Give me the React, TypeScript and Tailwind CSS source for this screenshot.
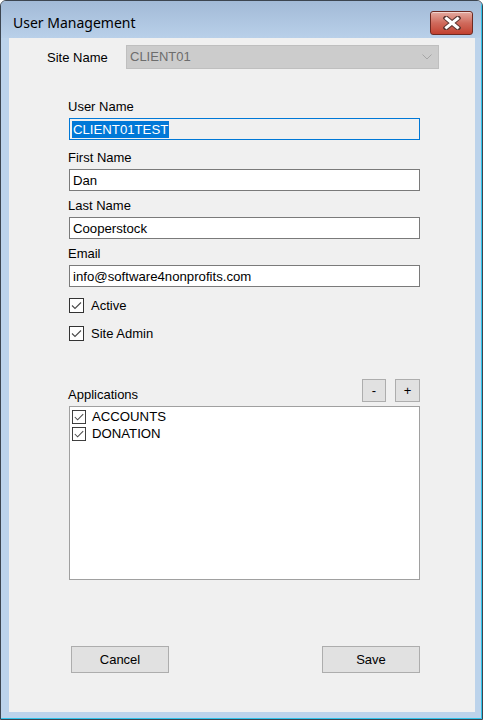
import { ReactNode } from "react";

const font = { fontFamily: '"Liberation Sans", Arial, sans-serif' };

function Label({ children }: { children: ReactNode }) {
  return <div className="-ml-px h-[15px] text-[13px] leading-[15px] text-black">{children}</div>;
}

function TextBox({ value, focused = false }: { value: string; focused?: boolean }) {
  return (
    <div
      className={
        "flex h-[22px] w-[351px] items-center border px-[2px] text-[13.2px] " +
        (focused ? "border-[#0078d7] bg-[#f0f0f0]" : "border-[#7a7a7a] bg-white")
      }
    >
      {focused ? (
        <span className="bg-[#0078d7] px-px leading-[17px] text-white">{value}</span>
      ) : (
        <span className="pl-px leading-[17px] text-black">{value}</span>
      )}
    </div>
  );
}

function Check({ size = 15 }: { size?: number }) {
  return (
    <svg width={size} height={size} viewBox="0 0 15 15" className="shrink-0">
      <rect x="0.5" y="0.5" width="14" height="14" fill="white" stroke="#333333" />
      <path d="M3 7.5 L6 10.5 L12 4.5" fill="none" stroke="#4a4a4a" strokeWidth="1.1" />
    </svg>
  );
}

function Button({ children, className = "" }: { children: ReactNode; className?: string }) {
  return (
    <div
      className={
        "flex items-center justify-center border border-[#adadad] bg-[#e1e1e1] text-[13px] text-black " +
        className
      }
    >
      {children}
    </div>
  );
}

export default function App() {
  return (
    <div
      style={font}
      className="h-[720px] w-[483px] overflow-hidden rounded-t-[6px] border border-[#3c4550] bg-[#bcd3eb]"
    >
      <div className="flex h-full flex-col border-b border-r border-[#2fc3ea]">
        {/* title bar */}
        <div className="flex h-[37px] shrink-0 items-start justify-between bg-gradient-to-b from-[#a2bad7] to-[#b9d0e9] pl-[12px] pr-[8px]">
          <div
            className="mt-[13px] text-[14px] leading-[18px] text-black"
            style={{ fontFamily: '"Noto Sans", "Open Sans", sans-serif' }}
          >
            User Management
          </div>
          <div className="mt-[10px] flex h-[24px] w-[43px] items-center justify-center rounded-[3px] border border-[#6e2a22] bg-gradient-to-b from-[#e4aaa0] via-[#cf6a5c] to-[#c2402f] shadow-[inset_0_1px_0_rgba(255,255,255,0.5)]">
            <svg width="18" height="14" viewBox="0 0 18 14">
              <path d="M3 2 L15 12 M15 2 L3 12" stroke="#5b3632" strokeWidth="5" strokeLinecap="square" />
              <path d="M3.5 2.5 L14.5 11.5 M14.5 2.5 L3.5 11.5" stroke="#ffffff" strokeWidth="3" strokeLinecap="square" />
            </svg>
          </div>
        </div>

        {/* client area */}
        <div className="ml-[8px] mr-[6px] flex flex-1 flex-col bg-[#f0f0f0]">
          <div className="mt-[7px] flex items-center">
            <div className="ml-[38px] w-[79px] text-[13px] leading-[15px] text-black">Site Name</div>
            <div className="flex h-[24px] w-[313px] items-center justify-between border border-[#bfbfbf] bg-[#cccccc] pl-[3px] pr-[6px] text-[13px] text-[#6d6d6d]">
              <span>CLIENT01</span>
              <svg width="10" height="6" viewBox="0 0 10 6">
                <path d="M0.5 0.5 L5 5 L9.5 0.5" fill="none" stroke="#a6a6a6" strokeWidth="1" />
              </svg>
            </div>
          </div>

          <div className="ml-[60px] flex w-[351px] flex-col">
            <div className="mt-[30px]">
              <Label>User Name</Label>
            </div>
            <div className="mt-[4px]">
              <TextBox value="CLIENT01TEST" focused />
            </div>
            <div className="mt-[10px]">
              <Label>First Name</Label>
            </div>
            <div className="mt-[4px]">
              <TextBox value="Dan" />
            </div>
            <div className="mt-[7px]">
              <Label>Last Name</Label>
            </div>
            <div className="mt-[4px]">
              <TextBox value="Cooperstock" />
            </div>
            <div className="mt-[7px]">
              <Label>Email</Label>
            </div>
            <div className="mt-[4px]">
              <TextBox value="info@software4nonprofits.com" />
            </div>

            <div className="mt-[11px] flex h-[15px] items-center gap-[7px] text-[13px]">
              <Check />
              <span>Active</span>
            </div>
            <div className="mt-[13px] flex h-[15px] items-center gap-[7px] text-[13px]">
              <Check />
              <span>Site Admin</span>
            </div>

            <div className="mt-[38px] flex items-end">
              <div className="-ml-px flex-1 text-[13px] leading-[15px]">Applications</div>
              <Button className="h-[23px] w-[24px]">-</Button>
              <Button className="ml-[9px] h-[23px] w-[25px]">+</Button>
            </div>

            <div className="mt-[4px] flex h-[174px] flex-col border border-[#a0a0a0] bg-white pl-[2px] pt-px text-[13.2px] text-black">
              <div className="flex h-[17px] items-center gap-[6px]">
                <Check size={14} />
                <span>ACCOUNTS</span>
              </div>
              <div className="flex h-[17px] items-center gap-[6px]">
                <Check size={14} />
                <span>DONATION</span>
              </div>
            </div>

            <div className="mt-[66px] flex justify-between">
              <Button className="ml-[2px] h-[27px] w-[98px]">Cancel</Button>
              <Button className="h-[27px] w-[98px]">Save</Button>
            </div>
          </div>
        </div>
        <div className="h-[6px] shrink-0" />
      </div>
    </div>
  );
}
